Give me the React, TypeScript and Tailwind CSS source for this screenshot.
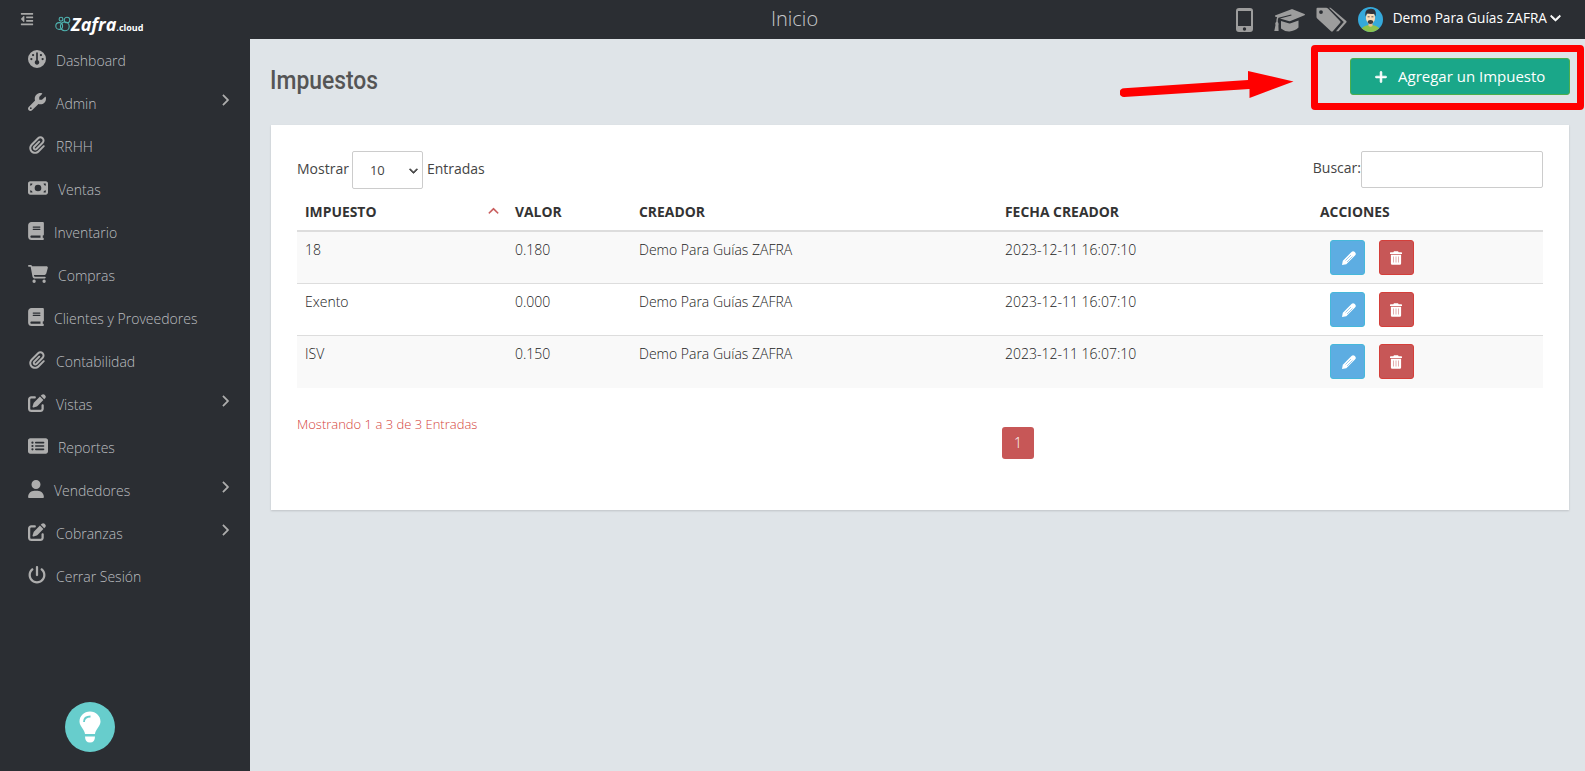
import {
  FaGauge, FaWrench, FaPaperclip, FaMoneyBill, FaBook, FaCartShopping,
  FaPenToSquare, FaRectangleList, FaUser, FaPowerOff, FaChevronRight,
  FaPlus, FaChevronDown, FaChevronUp,
} from 'react-icons/fa6';
import { FaOutdent } from 'react-icons/fa';

const navItems = [
  { label: 'Dashboard', icon: FaGauge, iconWidth: 'w-[18px]' },
  { label: 'Admin', icon: FaWrench, iconWidth: 'w-[18px]', children: true },
  { label: 'RRHH', icon: FaPaperclip, iconWidth: 'w-[18px]' },
  { label: 'Ventas', icon: FaMoneyBill, iconWidth: 'w-5' },
  { label: 'Inventario', icon: FaBook, iconWidth: 'w-4' },
  { label: 'Compras', icon: FaCartShopping, iconWidth: 'w-5' },
  { label: 'Clientes y Proveedores', icon: FaBook, iconWidth: 'w-4' },
  { label: 'Contabilidad', icon: FaPaperclip, iconWidth: 'w-[18px]' },
  { label: 'Vistas', icon: FaPenToSquare, iconWidth: 'w-[18px]', children: true },
  { label: 'Reportes', icon: FaRectangleList, iconWidth: 'w-5' },
  { label: 'Vendedores', icon: FaUser, iconWidth: 'w-4', children: true },
  { label: 'Cobranzas', icon: FaPenToSquare, iconWidth: 'w-[18px]', children: true },
  { label: 'Cerrar Sesión', icon: FaPowerOff, iconWidth: 'w-[18px]' },
];

const taxes = [
  { name: '18', value: '0.180' },
  { name: 'Exento', value: '0.000' },
  { name: 'ISV', value: '0.150' },
];

function Logo() {
  return (
    <div className="flex items-center h-[18px] text-white">
      <svg viewBox="0 0 16 16" className="w-4 h-4" fill="none" stroke="#4fb3b0" strokeWidth="1.1">
        <circle cx="4.2" cy="10" r="3.4" />
        <circle cx="9.8" cy="10.4" r="4.4" />
        <circle cx="6" cy="3.2" r="1.9" />
        <circle cx="12" cy="4" r="2.8" />
      </svg>
      <span className="text-[18px] leading-[18px] font-bold italic">Zafra</span>
      <span className="text-[9px] leading-[9px] font-bold mt-[7px]">.cloud</span>
    </div>
  );
}

function Avatar() {
  return (
    <svg viewBox="0 0 25 25" className="w-[25px] h-[25px]">
      <defs>
        <clipPath id="avatar"><circle cx="12.5" cy="12.5" r="12.5" /></clipPath>
      </defs>
      <g clipPath="url(#avatar)">
        <rect width="25" height="25" fill="#35a9db" />
        <path d="M3 25c0-5 4-7 9.500-7s9.500 2 9.500 7z" fill="#8dc24c" />
        <path d="M10.500 15h4v4q-2 1.500-4 0z" fill="#e8bd91" />
        <ellipse cx="12.500" cy="10.800" rx="4.600" ry="5.800" fill="#f8dcb8" />
        <path d="M7.600 9.500C6.500 3.800 9 2 12.800 1.800s6 2.500 4.700 7.700l-1.200-2.700q-3.600.6-7.500-.2z" fill="#2e3138" />
        <path d="M9.800 14q2.700-1.800 5.400 0 .3 3-2.700 3t-2.700-3z" fill="#3d3a3b" />
        <path d="M9.600 9.800h2M13.400 9.800h2" stroke="#3d3a3b" strokeWidth=".8" />
      </g>
    </svg>
  );
}

function Header() {
  return (
    <header className="h-[39px] flex-shrink-0 flex items-start bg-[#2b2e33] text-[#9d9d9d]">
      <FaOutdent className="w-[14px] h-[14px] ml-5 mt-3 text-[#a9a9a9]" />
      <div className="ml-[21px] mt-[15px] w-[100px]"><Logo /></div>
      <span className="ml-[616px] mt-[4px] text-[20px] leading-[30px] font-light text-[#c6c8ca]">Inicio</span>
      <div className="flex items-start ml-auto">
        <svg viewBox="0 0 17 24" className="w-[17px] h-6 mt-2" fill="currentColor">
          <path fillRule="evenodd" d="M3 0h11q3 0 3 3v18q0 3-3 3H3q-3 0-3-3V3Q0 0 3 0zM2 3v15h13V3zM8.500 19.300a1.700 1.700 0 1 0 0 3.400 1.700 1.700 0 0 0 0-3.400z" />
        </svg>
        <svg viewBox="0 0 31 23" className="w-[31px] h-[23px] ml-[21px] mt-[9px]" fill="currentColor">
          <path d="M1 6.500 17.500.200Q18 0 18.500.2L30.500 5q1 .6 0 1.200L16.500 12q-1 .3-2 0L6 9.500l11.500-3-.3-1L4.500 8.700Q3.600 10 3.800 13q1.200 1.500.6 3.500l.2 5.500H.300L1.500 16q-.8-2 .8-3.300 0-3 .8-4.500L1 7.500z" />
          <path d="M7 12l7.500 2.300q1.200.3 2.300 0L24.500 11.500V18.500q-4 3.700-9 3.900-5 .2-8.500-2.900z" />
        </svg>
        <svg viewBox="0 0 31 25" className="w-[31px] h-[25px] ml-[11px] mt-[7px]" fill="currentColor">
          <path fillRule="evenodd" d="M1.500.8h8.700q1 0 1.800.7L24 14q1 1 0 2l-7.200 8.300q-.8.800-1.800 0L1.200 11.500q-.7-.6-.7-1.500V1.800q0-1 1-1zM5 3.200a1.900 1.900 0 1 0 0 3.800 1.900 1.900 0 0 0 0-3.800z" />
          <path d="M13 .8h1.600L30.300 14q.7.800 0 1.600L22.500 24.300H20l7.800-9.300z" />
        </svg>
        <div className="ml-[11px] mt-[7px]"><Avatar /></div>
        <span className="ml-[10px] mt-[8px] text-[13.65px] leading-5 text-white whitespace-nowrap">Demo Para Guías ZAFRA</span>
        <FaChevronDown strokeWidth={45} className="w-[11px] h-[11px] overflow-visible ml-[3px] mt-3 mr-[24px] text-white" />
      </div>
    </header>
  );
}

function Sidebar() {
  return (
    <aside className="relative w-[250px] flex-shrink-0 bg-[#2b2e33]">
      <nav>
        {navItems.map(({ label, icon: Icon, iconWidth, children }) => (
          <a key={label} className="flex items-center h-[43px] pl-7 pr-[18px] text-[14px] font-light text-[#bcbec0]">
            <Icon className={`${iconWidth} h-[18px] flex-shrink-0 text-[#adadad] -mt-[3px]`} />
            <span className="ml-[10px] -mt-px">{label}</span>
            {children && <FaChevronRight strokeWidth={20} className="w-3 h-3 overflow-visible ml-auto -mt-[8px] mr-px text-[#adadad]" />}
          </a>
        ))}
      </nav>
      <button className="absolute left-[65px] bottom-[19px] w-[50px] h-[50px] rounded-full bg-[#67cdcc] flex items-center justify-center">
        <svg viewBox="0 0 22 32" className="w-[22px] h-8">
          <path d="M11 .5C5 .5.500 5 .500 10.500c0 5 5 7.500 5.500 12.500h10c.5-5 5.500-7.500 5.500-12.500C21.500 5 17 .5 11 .5z" fill="#fff" />
          <path d="M6 25.500h10q0 6-5 6t-5-6z" fill="#fff" />
          <path d="M5 11q0-5.500 6.500-5.500" fill="none" stroke="#67cdcc" strokeWidth="1.800" />
        </svg>
      </button>
    </aside>
  );
}

function RowActions() {
  return (
    <div className="flex gap-[14px] pl-[10px]">
      <button className="w-[35px] h-[35px] rounded-[3px] border border-[#46b8da] bg-[#5dade2] flex items-center justify-center">
        <svg viewBox="0 0 14 14" className="w-[14px] h-[14px] ml-[2px] mt-px" fill="#fff">
          <path d="M0 14l.8-4.300L9.500 1q1.500-1.500 3-.2l.7.700q1.300 1.500-.2 3L4.300 13.200z" />
          <path d="M3.500 9.500l5.500-5.500M5 11l5.500-5.500" stroke="#5dade2" strokeWidth=".6" />
        </svg>
      </button>
      <button className="w-[35px] h-[35px] rounded-[3px] border border-[#d43f3a] bg-[#c75757] flex items-center justify-center">
        <svg viewBox="0 0 12 14" className="w-3 h-[14px] mt-px mr-px" fill="#fff">
          <path d="M4 .3h4l.7 1h2.600q.7 0 .7.700v1H0V2q0-.7.700-.7h2.600zM.9 3.800h10.200V12.500q0 1.300-1.300 1.300H2.200q-1.300 0-1.300-1.300z" />
          <path d="M3.500 5.500v6M6 5.500v6M8.500 5.500v6" stroke="#c75757" strokeWidth=".8" opacity=".6" />
        </svg>
      </button>
    </div>
  );
}

function TaxTable() {
  return (
    <table className="w-full table-fixed border-collapse text-left text-[14px] leading-5">
      <colgroup>
        <col className="w-[210px]" />
        <col className="w-[124px]" />
        <col className="w-[366px]" />
        <col className="w-[315px]" />
        <col />
      </colgroup>
      <thead>
        <tr className="h-10 border-b-2 border-[#ddd] text-[#333] text-[13.9px] align-middle">
          <th className="px-2 pt-[3px] font-bold">
            <div className="flex items-center justify-between">
              IMPUESTO
              <FaChevronUp strokeWidth={15} className="w-[11px] h-[11px] -mt-px text-[#c75757]" />
            </div>
          </th>
          <th className="px-2 pt-[3px] font-bold">VALOR</th>
          <th className="px-2 pt-[3px] font-bold">CREADOR</th>
          <th className="px-2 pt-[3px] font-bold">FECHA CREADOR</th>
          <th className="px-2 pt-[3px] font-bold">ACCIONES</th>
        </tr>
      </thead>
      <tbody>
        {taxes.map(({ name, value }) => (
          <tr key={name} className="h-[52px] border-t border-[#ddd] odd:bg-[#f9f9f9] align-top font-light text-[#222]">
            <td className="p-2">{name}</td>
            <td className="p-2">{value}</td>
            <td className="p-2">Demo Para Guías ZAFRA</td>
            <td className="p-2">2023-12-11 16:07:10</td>
            <td className="p-2"><RowActions /></td>
          </tr>
        ))}
      </tbody>
    </table>
  );
}

export default function App() {
  return (
    <div className="relative flex flex-col h-[771px] w-[1585px] overflow-hidden bg-[#dfe4e8] font-['Open_Sans',sans-serif]">
      <Header />
      <div className="flex flex-1 min-h-0">
        <Sidebar />
        <main className="flex-1 pl-5 pr-[15px]">
          <div className="flex items-start justify-between h-[86px]">
            <h1 className="mt-[26px] text-[25px] leading-8 font-medium text-[#555] origin-left scale-x-[0.915] font-['Roboto',sans-serif]">Impuestos</h1>
            <button className="flex items-center w-[220px] h-[37px] mt-[19px] pl-[23px] rounded-[3px] border border-[#4cae4c] bg-[#1aa789] text-white text-[15px]">
              <FaPlus strokeWidth={25} className="w-[14px] h-[14px]" />
              <span className="ml-[10px] whitespace-nowrap">Agregar un Impuesto</span>
            </button>
          </div>

          <section className="h-[385px] mx-px bg-white px-[26px] pt-[26px] pb-0 shadow-[0_1px_2px_rgba(0,0,0,0.15)]">
            <div className="flex items-start justify-between h-10 text-[14px] text-[#444]">
              <div className="flex items-start">
                <span className="mt-[8px] leading-5">Mostrar</span>
                <div className="flex items-center w-[71px] h-[38px] ml-[3px] pl-[17px] pr-1 border border-[#ccc] rounded-[2px] text-[13px]">
                  <span className="mt-px">10</span>
                  <FaChevronDown strokeWidth={45} className="w-[9px] h-[9px] overflow-visible ml-auto" />
                </div>
                <span className="ml-1 mt-[8px] leading-5">Entradas</span>
              </div>
              <div className="flex items-start">
                <span className="mt-[7px] leading-5">Buscar:</span>
                <input className="w-[182px] h-[37px] border border-[#ccc] rounded-[2px] bg-white" />
              </div>
            </div>

            <TaxTable />

            <div className="flex items-start pt-[27px]">
              <p className="w-[705px] -mt-px text-[13px] leading-5 font-light text-[#d43f3a]">Mostrando 1 a 3 de 3 Entradas</p>
              <button className="w-8 h-8 mt-3 rounded-[3px] bg-[#c75757] text-white text-[14px] font-light">1</button>
            </div>
          </section>
        </main>
      </div>

      {/* Callout pointing at the add button */}
      <div className="absolute left-[1311px] top-[45px] w-[273px] h-[65px] border-[7px] border-[#f00] rounded-[4px] pointer-events-none" />
      <svg viewBox="0 0 174 28" className="absolute left-[1120px] top-[71px] w-[174px] h-7 pointer-events-none" fill="#f00">
        <path d="M4 17.200 128 9V0l45.500 10.500L129.500 27v-9L4 26A4.400 4.400 0 0 1 4 17.200z" />
      </svg>
    </div>
  );
}
